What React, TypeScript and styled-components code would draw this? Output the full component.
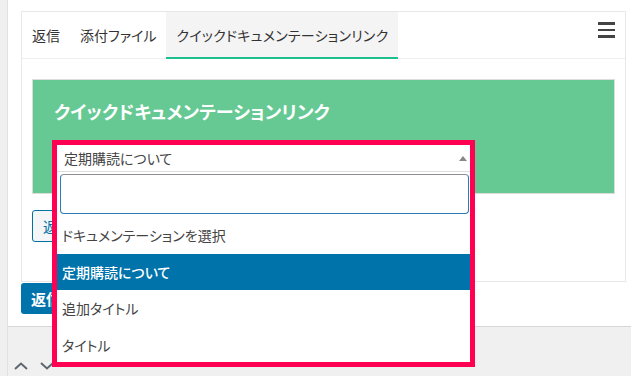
import React from 'react';
import styled, { createGlobalStyle } from 'styled-components';

const GlobalStyle = createGlobalStyle`
    html, body {
        margin: 0;
        padding: 0;
        background: #f0f0f0;
        font-family: 'Noto Sans CJK JP', 'Noto Sans', sans-serif;
        font-feature-settings: 'palt';
        color: #444;
        overflow: hidden;
    }
`;

const Page = styled.div`
    height: 376px;
    margin-left: 7px;
    border-left: 1px solid #e2e2e2;
    box-sizing: border-box;
`;

const Panel = styled.section`
    height: 327px;
    background: #fff;
    border-bottom: 1px solid #d6d6d6;
    box-sizing: border-box;
    padding: 11px 0 0 13px;
`;

const TabBox = styled.div`
    width: 605px;
    height: 271px;
    border: 1px solid #e8e8e8;
    box-sizing: border-box;
`;

const TabBar = styled.nav`
    display: flex;
    align-items: stretch;
    height: 47px;
    border-bottom: 1px solid #eee;
    box-sizing: border-box;
    padding-right: 10px;
`;

const Tab = styled.div<{ $active?: boolean }>`
    display: flex;
    align-items: center;
    padding: 0 10px;
    font-size: 14px;
    letter-spacing: ${(p) => (p.$active ? '0.25px' : '0')};
    color: #333;
    background: ${(p) => (p.$active ? '#f4f4f4' : 'transparent')};
    border-bottom: 2px solid ${(p) => (p.$active ? '#1dbf8e' : 'transparent')};
    margin-bottom: -1px;
`;

const Hamburger = styled.div`
    margin-left: auto;
    width: 17px;
    padding-top: 10px;
    display: flex;
    flex-direction: column;
    gap: 4px;

    span {
        display: block;
        height: 2.5px;
        background: #444;
    }
`;

const Content = styled.div`
    padding: 20px 10px 0;
`;

const GreenBox = styled.div`
    position: relative;
    height: 115px;
    background: #66c993;
    border: 1px solid #dcdcdc;
    box-sizing: border-box;
    padding: 19px 21px 0;
`;

const Title = styled.h2`
    margin: 0;
    font-size: 18px;
    font-weight: 700;
    line-height: 24px;
    letter-spacing: 0.15px;
    color: #fff;
`;

const OutlineButton = styled.button`
    margin-top: 16px;
    height: 32px;
    padding: 0 10px;
    font-family: inherit;
    font-size: 14px;
    color: #0071a1;
    background: #f3f5f6;
    border: 1px solid #0071a1;
    border-radius: 3px;
`;

const PrimaryButton = styled.button`
    display: block;
    margin-top: 1px;
    height: 31px;
    padding: 0 10px;
    font-family: inherit;
    font-size: 15px;
    font-weight: 700;
    color: #fff;
    background: #0073aa;
    border: none;
    border-radius: 3px;
`;

const Dropdown = styled.div`
    position: absolute;
    left: 19px;
    top: 60px;
    width: 423px;
    height: 227px;
    box-sizing: border-box;
    border: 5px solid #ff0052;
    background: #fff;
    display: flex;
    flex-direction: column;
    overflow: hidden;
`;

const Selection = styled.div`
    display: flex;
    align-items: center;
    height: 27px;
    flex: none;
    padding: 0 3px 0 7px;
    border-bottom: 1px solid #ddd;
    box-sizing: border-box;
    font-size: 14px;
    color: #444;
`;

const Arrow = styled.span`
    margin-left: auto;
    width: 0;
    height: 0;
    border-left: 4px solid transparent;
    border-right: 4px solid transparent;
    border-bottom: 5px solid #888;
`;

const SearchRow = styled.div`
    padding: 2px 1px 3px 3px;
    flex: none;
`;

const SearchInput = styled.input`
    display: block;
    width: 100%;
    height: 40px;
    box-sizing: border-box;
    border: 1px solid #2c7bb6;
    border-top-color: #8c8f94;
    border-radius: 4px;
    outline: none;
    font-family: inherit;
    font-size: 14px;
`;

const OptionList = styled.ul`
    list-style: none;
    margin: 0;
    padding: 0;
`;

const Option = styled.li<{ $selected?: boolean }>`
    height: 36.7px;
    line-height: 36.7px;
    padding: 0 5px;
    font-size: 14px;
    font-weight: ${(p) => (p.$selected ? 500 : 400)};
    color: ${(p) => (p.$selected ? '#fff' : '#444')};
    background: ${(p) => (p.$selected ? '#0073aa' : '#fff')};
`;

const Pager = styled.div`
    display: flex;
    gap: 12px;
    padding: 35px 0 0 6px;
`;

const options = ['ドキュメンテーションを選択', '定期購読について', '追加タイトル', 'タイトル'];

function Chevron({ up }: { up?: boolean }) {
    return (
        <svg width="14" height="8" viewBox="0 0 14 8">
            <polyline
                points={up ? '1,7 7,1.5 13,7' : '1,1 7,6.5 13,1'}
                fill="none"
                stroke="#5d6670"
                strokeWidth="2"
            />
        </svg>
    );
}

export default function App() {
    return (
        <>
            <GlobalStyle />
            <Page>
                <Panel>
                    <TabBox>
                        <TabBar>
                            <Tab>返信</Tab>
                            <Tab>添付ファイル</Tab>
                            <Tab $active>クイックドキュメンテーションリンク</Tab>
                            <Hamburger>
                                <span />
                                <span />
                                <span />
                            </Hamburger>
                        </TabBar>
                        <Content>
                            <GreenBox>
                                <Title>クイックドキュメンテーションリンク</Title>
                                <Dropdown>
                                    <Selection>
                                        定期購読について
                                        <Arrow />
                                    </Selection>
                                    <SearchRow>
                                        <SearchInput type="text" />
                                    </SearchRow>
                                    <OptionList>
                                        {options.map((o) => (
                                            <Option key={o} $selected={o === '定期購読について'}>
                                                {o}
                                            </Option>
                                        ))}
                                    </OptionList>
                                </Dropdown>
                            </GreenBox>
                            <OutlineButton>返信を挿入</OutlineButton>
                        </Content>
                    </TabBox>
                    <PrimaryButton>返信</PrimaryButton>
                </Panel>
                <Pager>
                    <Chevron up />
                    <Chevron />
                </Pager>
            </Page>
        </>
    );
}
